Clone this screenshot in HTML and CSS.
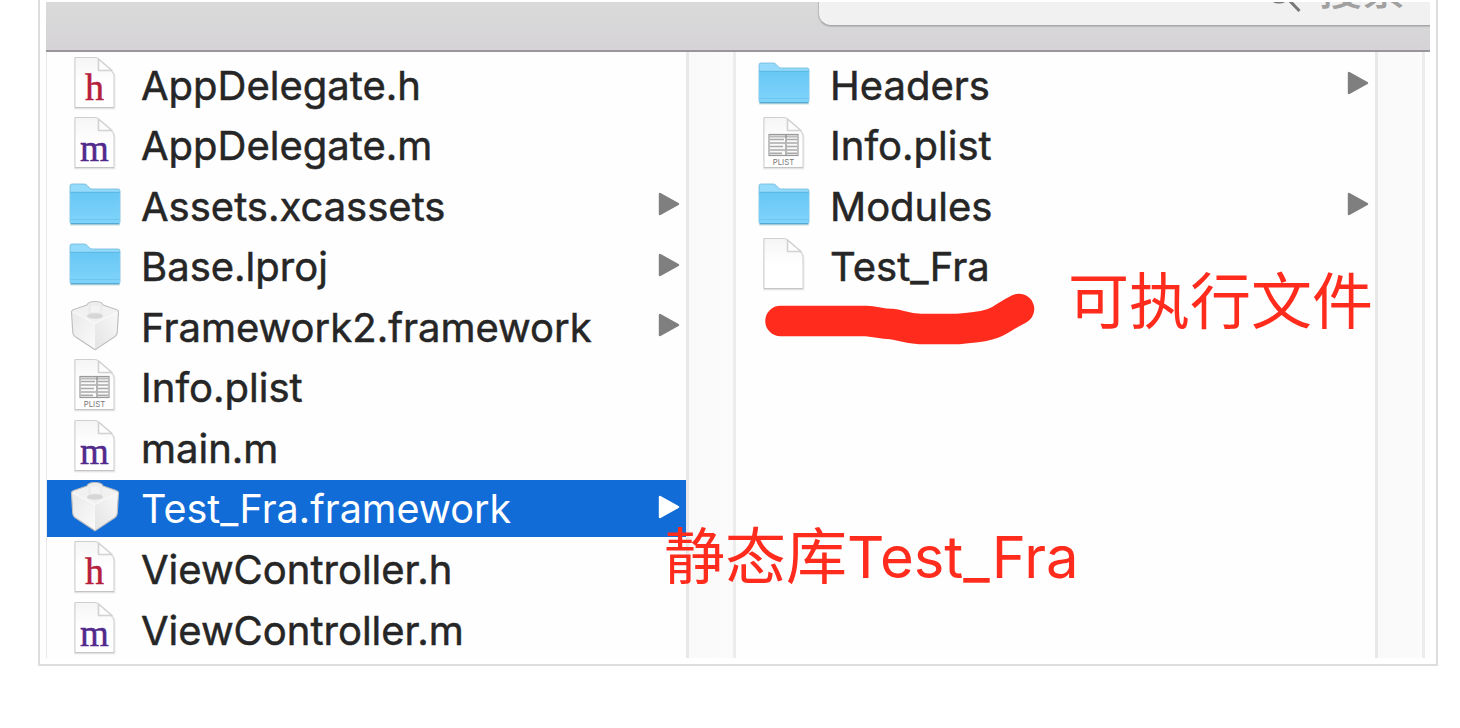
FILE: index.html
```
<!DOCTYPE html>
<html lang="zh-CN">
<head>
<meta charset="utf-8">
<title>Finder</title>
<link rel="stylesheet" href="styles.css">
</head>
<body>
<svg class="defs" width="0" height="0" aria-hidden="true">
  <defs>
    <linearGradient id="paper" x1="0" y1="0" x2="0" y2="1"><stop offset="0" stop-color="#f5f5f5"/><stop offset=".5" stop-color="#fff"/></linearGradient>
    <linearGradient id="blue" x1="0" y1="0" x2="0" y2="1"><stop offset="0" stop-color="#68c7f4"/><stop offset="1" stop-color="#7fd4fb"/></linearGradient>
    <linearGradient id="left" x1="0" y1="0" x2="1" y2="1"><stop offset="0" stop-color="#e9e9e9"/><stop offset="1" stop-color="#fafafa"/></linearGradient>
    <linearGradient id="right" x1="0" y1="1" x2="1" y2="0"><stop offset="0" stop-color="#e4e4e4"/><stop offset="1" stop-color="#f8f8f8"/></linearGradient>
    <symbol id="doc" viewBox="0 0 52 60">
      <path d="M6 3.5h19.500q3 0 5 2L43.500 17q2 2 2 5v31.500H6z" fill="none" stroke="#000" stroke-opacity=".07" stroke-width="2"/>
      <path d="M6 2.500h19.500q3 0 5 2L43 16.500q2 2 2 5v31H6z" fill="url(#paper)" stroke="#cfcfcf"/>
      <path d="M6 52.700h39" stroke="#c2c2c2"/>
      <path d="M29.500 4v11.500h13.500z" fill="#fdfdfd" stroke="#d2d2d2" stroke-width="1.600" stroke-linejoin="round"/>
    </symbol>
    <symbol id="folder" viewBox="0 0 52 60">
      <path d="M1 48.500h50" stroke="#8aa" stroke-opacity=".4" stroke-width="2"/>
      <path d="M1 10q0-2 2-2h12q2 0 3 1.300l2.500 2.700q1 1 3 1h25.500q2 0 2 2v31q0 2-2 2H3q-2 0-2-2z" fill="#94dafa" stroke="#6fb9dc" stroke-width=".8"/>
      <path d="M1.300 16h49.400v29.500q0 2-2 2H3.300q-2 0-2-2z" fill="url(#blue)"/>
      <path d="M1.300 16.300h49.400" stroke="#5bb7e2"/>
      <path d="M1.300 43.500h49.400" stroke="#68bce5" stroke-opacity=".6"/>
      <path d="M2 47.600h48" stroke="#4fa5d0"/>
    </symbol>
    <symbol id="brick" viewBox="0 0 52 60">
      <path d="M2.500 14.500q.5-1.500 3-2.300L18 8q1-3.500 8-3.500T34 8l12.500 4.200q2.500.8 3 2.300l-1.300 21q-.2 2.500-2.200 4L26 52.700 6 39.500q-2-1.500-2.200-4z" fill="#f1f1f1" stroke="#bfbfbf" stroke-width="1.200" stroke-linejoin="round"/>
      <path d="M3.500 15L26 26.500V51.500L7 39q-2-1.500-2.200-3.800z" fill="url(#left)"/>
      <path d="M48.500 15L26 26.500V51.500L45 39q2-1.500 2.200-3.800z" fill="url(#right)"/>
      <path d="M3.800 15L26 26.500 48.200 15" fill="none" stroke="#fff" stroke-opacity=".7"/>
      <path d="M19 8.500q1-3 7-3t7 3v9.500q-1 3-7 3t-7-3z" fill="#ececec"/>
      <path d="M22 8.500h9v7h-9z" fill="#f3f3f3"/>
      <ellipse cx="26" cy="19" rx="8" ry="2.800" fill="#d6d6d6"/>
    </symbol>
    <symbol id="plist" viewBox="0 0 52 60">
      <use href="#doc" width="52" height="60"/>
      <rect x="11" y="19.500" width="29" height="21" fill="#fafafa" stroke="#999" stroke-width="1.200"/>
      <path d="M11.500 21.500h28" stroke="#bbb" stroke-width="2"/>
      <path d="M12 24.500h14M29 24.500h10M12 28h15M29 28h10M12 31.500h13M29 31.500h10M12 35h15M29 35h10M12 38.300h12M29 38.300h10" stroke="#aaa" stroke-width="1.700"/>
      <path d="M28 20v20" stroke="#888" stroke-width="1.200"/>
      <text class="plist-label" x="25.500" y="50.200" text-anchor="middle">PLIST</text>
    </symbol>
    <symbol id="h" viewBox="0 0 52 60"><use href="#doc" width="52" height="60"/><text class="glyph-h" x="25.500" y="45" text-anchor="middle">h</text></symbol>
    <symbol id="m" viewBox="0 0 52 60"><use href="#doc" width="52" height="60"/><text class="glyph-m" x="25.500" y="45.500" text-anchor="middle">m</text></symbol>
    <symbol id="arrow" viewBox="0 0 22 24"><path d="M2 2v20L20 12z" fill="currentColor" stroke="currentColor" stroke-width="2.400" stroke-linejoin="round"/></symbol>
  </defs>
</svg>

<div class="frame">
  <div class="window">
    <div class="toolbar">
      <div class="search">
        <svg class="lens" viewBox="0 0 40 40"><circle cx="16" cy="16" r="12"/><path d="M24.500 24.500L36.500 37"/></svg>
        <span class="search-text">搜索</span>
      </div>
    </div>
    <div class="columns">
      <ul class="column">
        <li class="row"><svg class="icon"><use href="#h"/></svg><span class="name">AppDelegate.h</span></li>
        <li class="row"><svg class="icon"><use href="#m"/></svg><span class="name">AppDelegate.m</span></li>
        <li class="row"><svg class="icon"><use href="#folder"/></svg><span class="name">Assets.xcassets</span><svg class="arrow"><use href="#arrow"/></svg></li>
        <li class="row"><svg class="icon"><use href="#folder"/></svg><span class="name">Base.lproj</span><svg class="arrow"><use href="#arrow"/></svg></li>
        <li class="row"><svg class="icon"><use href="#brick"/></svg><span class="name">Framework2.framework</span><svg class="arrow"><use href="#arrow"/></svg></li>
        <li class="row"><svg class="icon"><use href="#plist"/></svg><span class="name">Info.plist</span></li>
        <li class="row"><svg class="icon"><use href="#m"/></svg><span class="name">main.m</span></li>
        <li class="row selected"><svg class="icon"><use href="#brick"/></svg><span class="name">Test_Fra.framework</span><svg class="arrow"><use href="#arrow"/></svg></li>
        <li class="row"><svg class="icon"><use href="#h"/></svg><span class="name">ViewController.h</span></li>
        <li class="row"><svg class="icon"><use href="#m"/></svg><span class="name">ViewController.m</span></li>
      </ul>
      <div class="gutter"></div>
      <ul class="column">
        <li class="row"><svg class="icon"><use href="#folder"/></svg><span class="name">Headers</span><svg class="arrow"><use href="#arrow"/></svg></li>
        <li class="row"><svg class="icon"><use href="#plist"/></svg><span class="name">Info.plist</span></li>
        <li class="row"><svg class="icon"><use href="#folder"/></svg><span class="name">Modules</span><svg class="arrow"><use href="#arrow"/></svg></li>
        <li class="row"><svg class="icon"><use href="#doc"/></svg><span class="name">Test_Fra</span></li>
      </ul>
      <div class="gutter"></div>
    </div>
    <svg class="marker" viewBox="0 0 280 60"><path d="M20.500 31H106C116 31.500 121 34 131 34C141 35 144 38 160 39H198C220 37 230 36 240 30C247 26 249 24 259 19"/></svg>
    <span class="note note-exec">可执行文件</span>
    <span class="note note-lib">静态库<span class="latin">Test_Fra</span></span>
  </div>
</div>
</body>
</html>
```
FILE: styles.css
```
body {
  margin: 0;
  background: #fff;
  font-family: Inter, "Noto Sans CJK SC", sans-serif;
  overflow: hidden;
}
.defs { position: absolute; }
.frame {
  box-sizing: border-box;
  width: 1400px;
  height: 666px;
  margin-left: 38px;
  padding: 2px 6px 6px;
  border: 2px solid #ddd;
  border-top: 0;
}
.window {
  position: relative;
  width: 1384px;
  height: 656px;
  overflow: hidden;
  background: #fefefe;
}
.toolbar {
  box-sizing: border-box;
  height: 50px;
  padding-left: 772px;
  overflow: hidden;
  background: linear-gradient(#dadada, #d5d3d6);
  border-bottom: 2px solid #99969b;
}
.search {
  box-sizing: border-box;
  display: flex;
  height: 24px;
  padding-left: 450px;
  border-left: 1px solid #bbb;
  border-bottom: 1px solid #a8a8a8;
  border-bottom-left-radius: 13px;
  background: #f1f1f1;
  box-shadow: 0 1px 1px #b9b7ba;
  overflow: hidden;
}
.lens {
  flex: none;
  width: 40px;
  height: 40px;
  margin-top: -28px;
  margin-left: -6px;
  fill: none;
  stroke: #777;
  stroke-width: 3;
}
.search-text {
  margin: -38px 0 0 16px;
  font: 500 43px/44px "Noto Sans CJK SC", sans-serif;
  color: #a0a0a0;
  white-space: nowrap;
}
.columns {
  box-sizing: border-box;
  display: flex;
  height: 606px;
  border-left: 1px solid #e8e8e8;
}
.column {
  box-sizing: border-box;
  flex: none;
  width: 639px;
  margin: 0;
  padding: 2.400px 0 0;
  list-style: none;
}
.gutter {
  box-sizing: border-box;
  flex: none;
  width: 50px;
  border-left: 3px solid #e8e8e8;
  border-right: 3px solid #ececec;
  background: linear-gradient(90deg, #f9f9f9, #fbfbfb);
}
.row {
  box-sizing: border-box;
  display: flex;
  align-items: center;
  height: 60.550px;
  padding: 0 6px 0 22px;
  color: #262626;
}
.selected {
  color: #fff;
  background: linear-gradient(#126cd8, #126cd8) center / 100% 57px no-repeat;
}
.icon { flex: none; width: 52px; height: 60px; }
.name {
  flex: 1;
  margin-left: 20px;
  padding-top: 1px;
  font-size: 40px;
  font-weight: 400;
  line-height: 57px;
  white-space: nowrap;
  -webkit-text-stroke: .5px currentColor;
}
.selected .name {
  padding-top: 3px;
  font-size: 39.500px;
  -webkit-text-stroke: 0;
}
.arrow {
  flex: none;
  width: 22px;
  height: 24px;
  margin-bottom: 3px;
  color: #7f7f7f;
}
.selected .arrow { color: #fff; }
.glyph-h { font: 38px "Liberation Serif", serif; fill: #b5203c; stroke: #b5203c; stroke-width: .5px; }
.glyph-m { font: 37px "Liberation Serif", serif; fill: #512a8c; stroke: #512a8c; stroke-width: .5px; }
.plist-label { font: 7.800px Inter, sans-serif; fill: #777; }
.marker {
  position: absolute;
  left: 714px;
  top: 288px;
  width: 280px;
  height: 60px;
  fill: none;
  stroke: #ff2b1c;
  stroke-width: 30.500px;
  stroke-linecap: round;
  stroke-linejoin: round;
}
.note {
  position: absolute;
  font: 400 61px/70px "Noto Sans CJK SC", sans-serif;
  color: #ff2b1c;
  white-space: nowrap;
}
.note-exec { left: 1022px; top: 261px; }
.note-lib { left: 618px; top: 516px; }
.latin { position: relative; top: -1px; font-family: Inter, sans-serif; font-size: 58px; }
```
